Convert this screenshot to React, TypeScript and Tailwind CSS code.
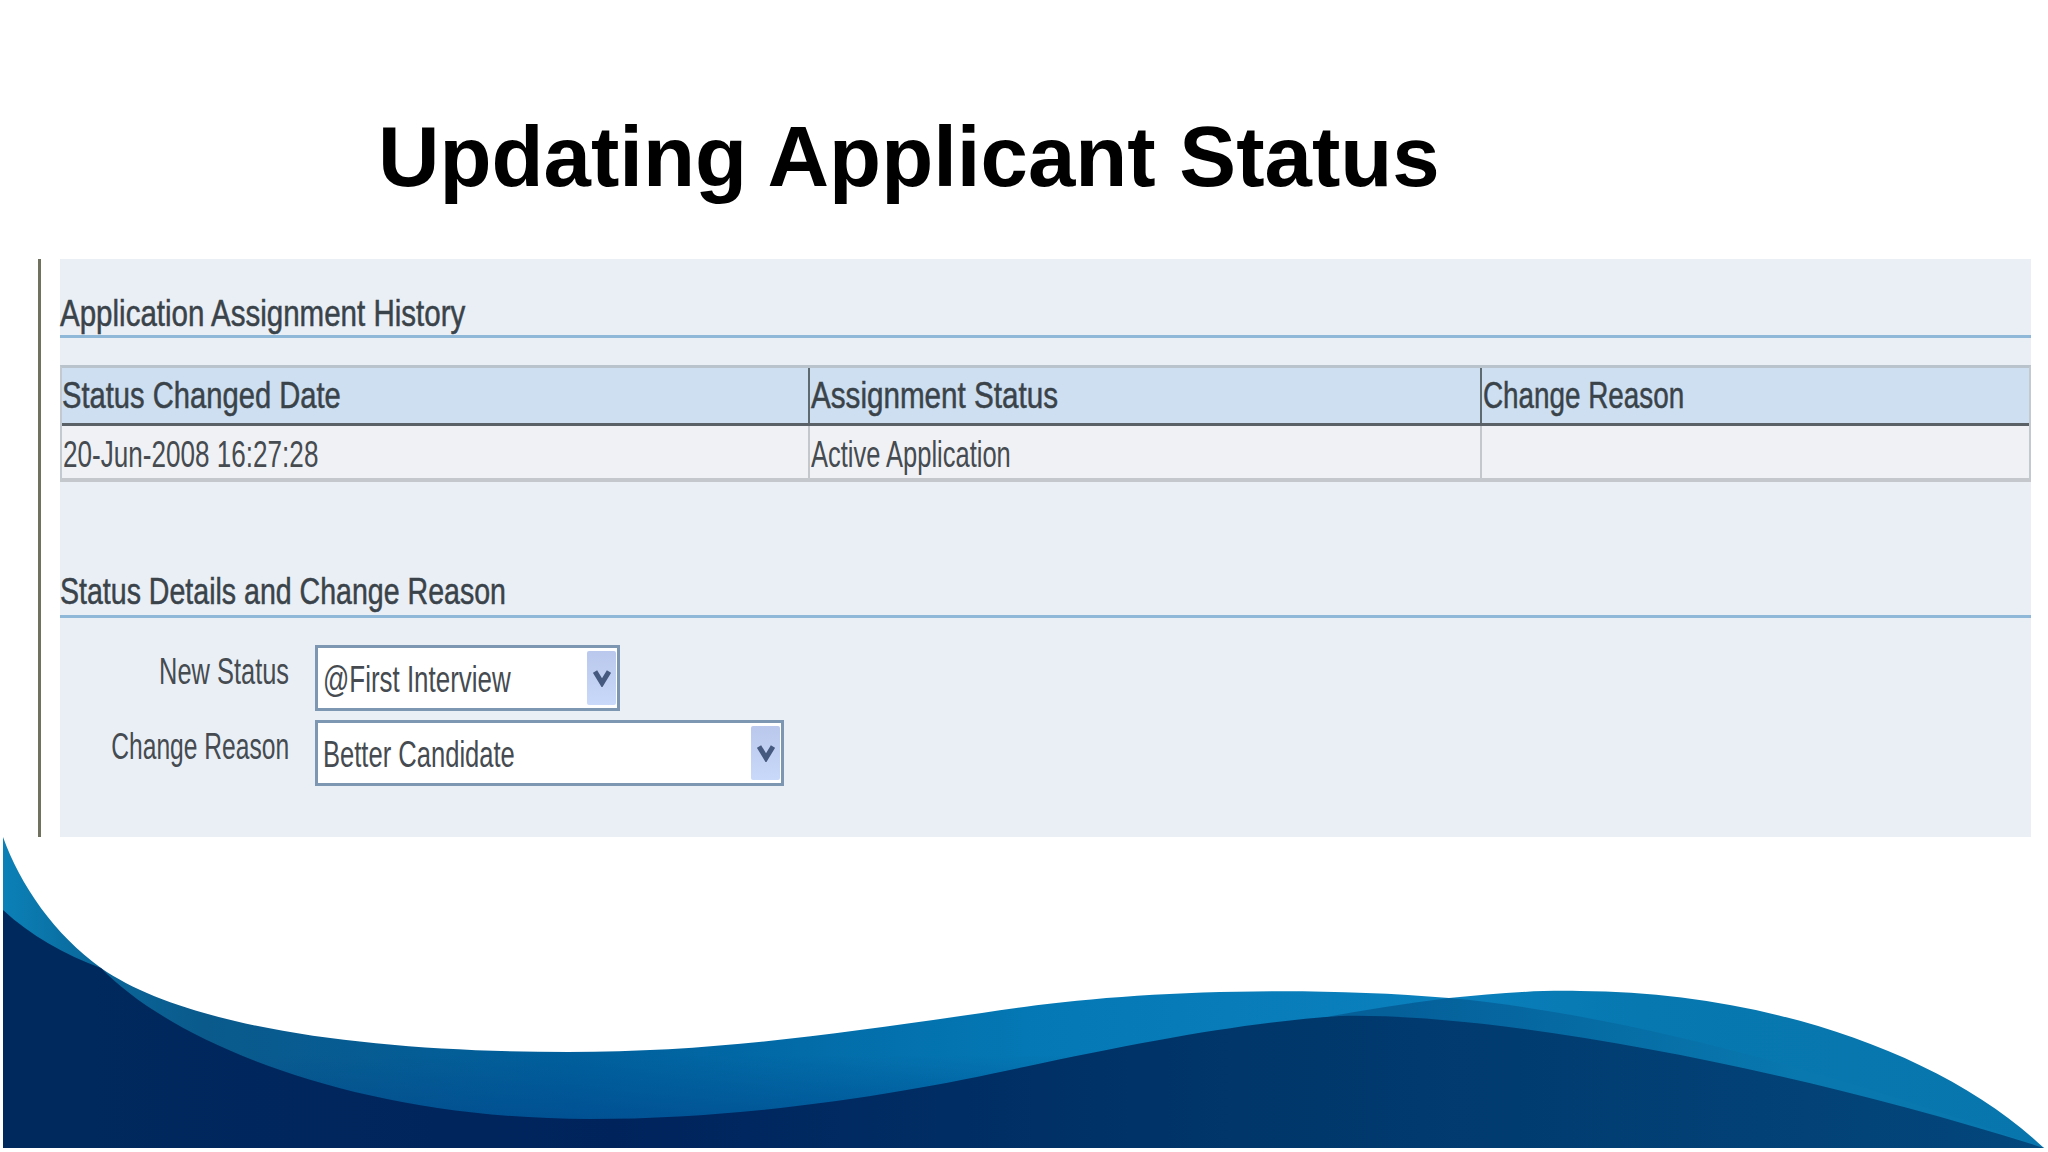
const body = "font-['Liberation_Sans',Arial,sans-serif]";

function Wave() {
  return (
    <svg className="absolute inset-0 h-full w-full" viewBox="0 0 2048 1152" aria-hidden="true">
      <defs>
        <linearGradient id="band" gradientUnits="userSpaceOnUse" x1="0" y1="0" x2="2048" y2="0">
          <stop offset="0" stopColor="#0b82b8" />
          <stop offset="0.05" stopColor="#0a6598" />
          <stop offset="0.1" stopColor="#0a5a8c" />
          <stop offset="0.28" stopColor="#005f9c" />
          <stop offset="0.5" stopColor="#0478b4" />
          <stop offset="0.7" stopColor="#0a80bd" />
          <stop offset="0.8" stopColor="#0778b0" />
          <stop offset="1" stopColor="#0876ad" />
        </linearGradient>
        <linearGradient id="shade" gradientUnits="userSpaceOnUse" x1="0" y1="1055" x2="0" y2="1120">
          <stop offset="0" stopColor="#00478c" stopOpacity="0" />
          <stop offset="1" stopColor="#00478c" stopOpacity="0.6" />
        </linearGradient>
        <linearGradient id="mid" gradientUnits="userSpaceOnUse" x1="1400" y1="0" x2="1800" y2="0">
          <stop offset="0" stopColor="#05609a" />
          <stop offset="1" stopColor="#0878ae" />
        </linearGradient>
        <linearGradient id="navy" gradientUnits="userSpaceOnUse" x1="0" y1="0" x2="2048" y2="0">
          <stop offset="0" stopColor="#002a5e" />
          <stop offset="0.3" stopColor="#00235c" />
          <stop offset="0.6" stopColor="#00366a" />
          <stop offset="1" stopColor="#03477c" />
        </linearGradient>
      </defs>
      <path
        fill="url(#band)"
        d="M3 837 C20 885 55 935 101 968 C190 1030 380 1052 568 1052 C730 1052 860 1030 1024 1007 C1130 992 1300 985 1449 998 C1490 994 1530 990 1580 991 C1760 992 1940 1050 2044 1148 L3 1148 Z"
      />
      <path fill="url(#shade)" d="M3 1055 H1300 V1148 H3 Z" />
      <path fill="url(#mid)" d="M1300 1022 C1350 1012 1400 1004 1449 998 C1600 1012 1800 1060 2044 1148 L1300 1148 Z" />
      <path
        fill="url(#navy)"
        d="M3 910 C30 935 65 955 101 968 C170 1040 350 1119 590 1119 C760 1119 920 1090 1024 1067 C1150 1040 1250 1022 1340 1016 C1500 1012 1800 1070 2044 1148 L3 1148 Z"
      />
    </svg>
  );
}

function Heading({ children, className }: { children: string; className: string }) {
  return (
    <span className={`inline-block origin-left whitespace-nowrap text-[36px] leading-none text-[#3a4349] [-webkit-text-stroke:0.5px_#3a4349] ${className}`}>
      {children}
    </span>
  );
}

function Cell({ children, className }: { children: string; className: string }) {
  return (
    <span className={`inline-block origin-left whitespace-nowrap text-[36px] leading-none text-[#454b50] ${className}`}>
      {children}
    </span>
  );
}

function Label({ children, className }: { children: string; className: string }) {
  return (
    <span className={`inline-block shrink-0 origin-right whitespace-nowrap text-[36px] leading-none text-[#454b50] ${className}`}>
      {children}
    </span>
  );
}

function Select({ value, width, textClass }: { value: string; width: string; textClass: string }) {
  return (
    <div className={`flex h-[66px] justify-between border-[3px] border-[#7d97b3] bg-white py-[3px] pl-[5px] pr-[1px] ${width}`}>
      <span className="mt-[11px]">
        <Cell className={textClass}>{value}</Cell>
      </span>
      <div className="flex w-[29px] items-center justify-center rounded-[2px] bg-gradient-to-b from-[#b9c8ec] to-[#c9d9f9]">
        <svg width="18" height="18" viewBox="0 0 18 18" aria-hidden="true">
          <polyline points="2,2.5 9,14 16,2.5" fill="none" stroke="#46597f" strokeWidth="5" />
        </svg>
      </div>
    </div>
  );
}

export default function App() {
  return (
    <div className={`relative h-[1152px] w-[2048px] overflow-hidden bg-white ${body}`}>
      <Wave />
      <div className="relative">
        <h1 className="pl-[378px] pt-[114px] text-[85.2px] font-bold leading-none text-black">Updating Applicant Status</h1>

        <div className="mt-[60px] flex pl-[38px]">
          <div className="h-[578px] w-[3px] bg-[#71715f]" />
          <div className="ml-[19px] h-[578px] w-[1971px] bg-[#eaeff6]">
            <div className="h-[79px] border-b-[3px] border-[#8fb8d8] pt-[37px]">
              <Heading className="scale-x-[0.82]">Application Assignment History</Heading>
            </div>

            <div className="mt-[27px] border-x-[2px] border-t-[3px] border-b-[4px] border-x-[#c2c9d0] border-t-[#b9c3cc] border-b-[#c4c8cc]">
              <div className="grid h-[58px] grid-cols-[746px_672px_1fr] border-b-[3px] border-[#5a6268] bg-[#cddff0]">
                <div className="pt-[10px]">
                  <Heading className="scale-x-[0.81]">Status Changed Date</Heading>
                </div>
                <div className="border-l-[2px] border-[#5f6a70] pl-[1px] pt-[10px]">
                  <Heading className="scale-x-[0.823]">Assignment Status</Heading>
                </div>
                <div className="border-l-[2px] border-[#5f6a70] pl-[1px] pt-[10px]">
                  <Heading className="scale-x-[0.773]">Change Reason</Heading>
                </div>
              </div>
              <div className="grid h-[52px] grid-cols-[746px_672px_1fr] bg-[#f0f1f4]">
                <div className="pl-[1px] pt-[11px]">
                  <Cell className="scale-x-[0.725]">20-Jun-2008 16:27:28</Cell>
                </div>
                <div className="border-l-[2px] border-[#c4c8cc] pl-[1px] pt-[11px]">
                  <Cell className="scale-x-[0.708]">Active Application</Cell>
                </div>
                <div className="border-l-[2px] border-[#c4c8cc]" />
              </div>
            </div>

            <div className="h-[136px] border-b-[3px] border-[#8fb8d8] pt-[92px]">
              <Heading className="scale-x-[0.793]">Status Details and Change Reason</Heading>
            </div>

            <div className="mt-[27px] grid grid-cols-[229px_1fr] gap-x-[26px] gap-y-[9px]">
              <div className="flex justify-end pt-[9px]">
                <Label className="scale-x-[0.706]">New Status</Label>
              </div>
              <Select value="@First Interview" width="w-[305px]" textClass="scale-x-[0.72]" />
              <div className="flex justify-end pt-[9px]">
                <Label className="scale-x-[0.684]">Change Reason</Label>
              </div>
              <Select value="Better Candidate" width="w-[469px]" textClass="scale-x-[0.71]" />
            </div>
          </div>
        </div>
      </div>
    </div>
  );
}
